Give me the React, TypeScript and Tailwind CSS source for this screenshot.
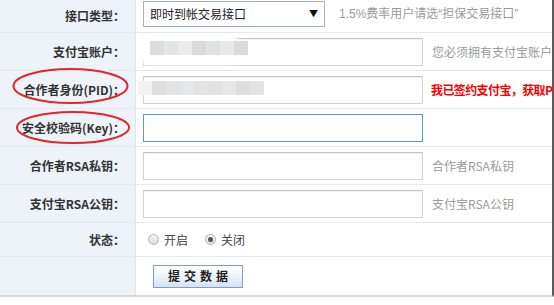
import React from "react";

function Row({
  label,
  h,
  children,
  className = "",
}: {
  label?: React.ReactNode;
  h: string;
  children?: React.ReactNode;
  className?: string;
}) {
  return (
    <div className={`flex box-border border-b border-[#e4e9ef] ${h} ${className}`}>
      <div className="w-[136px] shrink-0 bg-[#eef3f9] border-r border-[#dfe6ef] flex items-center justify-end pr-[10px] text-[#333] font-semibold">
        {label}
      </div>
      <div className="flex-1 flex items-center relative overflow-hidden whitespace-nowrap">{children}</div>
    </div>
  );
}

const Input = ({ focus }: { focus?: boolean }) => (
  <div
    className={`ml-[7px] w-[280px] h-[28px] shrink-0 bg-white border ${
      focus ? "border-[#5d97d2]" : "border-[#d3d3d3] border-t-[#c4c4c4] shadow-[inset_0_1px_1px_rgba(0,0,0,0.06)]"
    }`}
  />
);

const Hint = ({ children }: { children: React.ReactNode }) => (
  <span className="ml-[9px] text-[#9a9a9a] text-[12px]">{children}</span>
);

function Mosaic({ colors }: { colors: string[] }) {
  return (
    <div className="flex h-full">
      {colors.map((c, i) => (
        <div key={i} className="h-full w-[14px]" style={{ background: c }} />
      ))}
    </div>
  );
}

export default function App() {
  return (
    <div className="w-[554px] h-[305px] bg-white relative font-['Noto_Sans_CJK_SC','Microsoft_YaHei',sans-serif] text-[12px] leading-none text-[#333]">
      <div className="w-[554px] border-r-2 border-[#5a5a5a] border-b-2 border-b-[#d9d9d9]">
        <Row label="接口类型：" h="h-[33px]">
          <div className="ml-[7px] -mt-[5px] w-[182px] h-[26px] border border-[#9fb3c8] bg-white flex items-center justify-between pl-[6px] pr-[6px] text-[#222] font-normal">
            <span>即时到帐交易接口</span>
            <span className="text-[9px] text-[#111]">▼</span>
          </div>
          <span className="ml-[14px] -mt-[5px] text-[#9a9a9a] font-['Liberation_Sans','Noto_Sans_CJK_SC',sans-serif]">
            1.5%费率用户请选“担保交易接口”
          </span>
        </Row>
        <Row label="支付宝账户：" h="h-[38px]">
          <Input />
          <Hint>您必须拥有支付宝账户，还没有？点此申请</Hint>
          <div className="absolute left-[1px] top-[1px] w-[104px] h-[31px] bg-white rounded-[14px] blur-[2px]" />
          <div className="absolute left-[14px] top-[8px] h-[14px] blur-[0.6px]">
            <Mosaic colors={["#dcdcdc", "#e3e4e6", "#ececec", "#d9d9d9", "#dfe1e3", "#e9e9e9", "#dadada"]} />
          </div>
        </Row>
        <Row label="合作者身份(PID)：" h="h-[38px]">
          <Input />
          <span className="ml-[8px] text-[#ff0000] font-bold tracking-[-0.6px]">我已签约支付宝，获取PID、KEY</span>
          <div className="absolute left-[2px] top-[10px] h-[14px] blur-[0.6px]">
            <Mosaic colors={["#f2f2f2", "#dedede", "#e2e2e2", "#e4e6e8", "#e3e3e3", "#e1e1e1", "#e6e6e6", "#dddddd", "#e1e2e4"]} />
          </div>
        </Row>
        <Row label="安全校验码(Key)：" h="h-[38px]">
          <Input focus />
        </Row>
        <Row label="合作者RSA私钥：" h="h-[38px]">
          <Input />
          <Hint>合作者RSA私钥</Hint>
        </Row>
        <Row label="支付宝RSA公钥：" h="h-[38px]">
          <Input />
          <Hint>支付宝RSA公钥</Hint>
        </Row>
        <Row label="状态：" h="h-[34px]">
          <div className="ml-[12px] flex items-center gap-[5px]">
            <span className="w-[11px] h-[11px] rounded-full border border-[#b5b5b5] bg-gradient-to-b from-[#f4f4f4] to-[#dcdcdc]" />
            <span className="text-[#444]">开启</span>
          </div>
          <div className="ml-[17px] flex items-center gap-[5px]">
            <span className="w-[11px] h-[11px] rounded-full border border-[#b5b5b5] bg-gradient-to-b from-[#f4f4f4] to-[#dcdcdc] flex items-center justify-center">
              <span className="w-[5px] h-[5px] rounded-full bg-[#555]" />
            </span>
            <span className="text-[#444]">关闭</span>
          </div>
        </Row>
        <Row h="h-[38px]" className="border-b-0">
          <button className="ml-[17px] w-[90px] h-[23px] border border-[#7f9fc4] bg-gradient-to-b from-[#ffffff] via-[#eef3f9] to-[#d5e2f0] text-[#222] font-bold tracking-[4px] pl-[4px] text-[12px]">
            提交数据
          </button>
        </Row>
      </div>
      <svg className="absolute left-0 top-0 pointer-events-none" width="554" height="305">
        <ellipse cx="70.5" cy="86" rx="57" ry="17" fill="none" stroke="#e3262b" strokeWidth="2" />
        <ellipse cx="73" cy="127.5" rx="56" ry="15.5" fill="none" stroke="#e3262b" strokeWidth="2" />
      </svg>
    </div>
  );
}
